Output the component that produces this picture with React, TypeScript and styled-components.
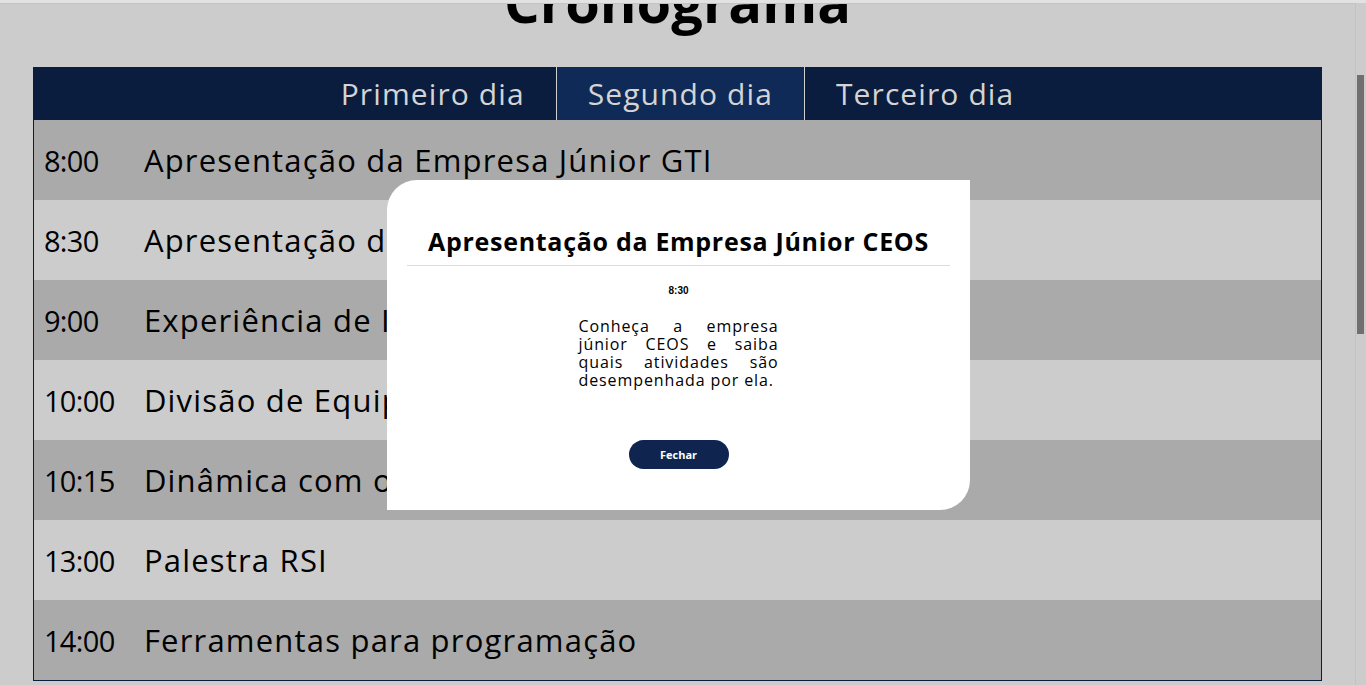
import React, { useState } from 'react';
import styled, { createGlobalStyle } from 'styled-components';

const FONT = '"Open Sans", "Noto Sans", "DejaVu Sans", sans-serif';

const GlobalStyle = createGlobalStyle`
  html, body {
    margin: 0;
    padding: 0;
    overflow: hidden;
    background: #cccccc;
    font-family: ${FONT};
  }
`;

const Page = styled.div`
  display: flex;
  height: 685px;
  border-top: 3px solid #e2e2e2;
  box-sizing: border-box;
`;

const Main = styled.main`
  flex: 1;
  display: flex;
  flex-direction: column;
  align-items: center;
  overflow: hidden;
  border-top: 1px solid #c4c4c4;
`;

const Title = styled.h1`
  margin: -37px 0 0;
  font-size: 56px;
  line-height: 68px;
  font-weight: 700;
  color: #000;
`;

const Schedule = styled.section`
  width: 95%;
  margin-top: 32px;
  border: 1px solid #0b1d3f;
  border-top: none;
`;

const TabBar = styled.nav`
  display: flex;
  justify-content: center;
  height: 53px;
  background: #0b1d3f;
`;

const Tab = styled.button<{ $active?: boolean }>`
  display: flex;
  align-items: center;
  padding: 0 31px;
  border: none;
  border-left: 1px solid #cfcfcf;
  background: ${(p) => (p.$active ? '#0f2a56' : 'transparent')};
  color: #d4d4d4;
  font-family: ${FONT};
  font-size: 30px;
  letter-spacing: 1.1px;
  font-weight: 400;
  cursor: pointer;

  &:first-child {
    border-left: none;
  }
`;

const Row = styled.div<{ $dark: boolean }>`
  display: flex;
  align-items: center;
  height: 80px;
  background: ${(p) => (p.$dark ? '#aaaaaa' : '#cccccc')};
  color: #000;
  font-size: 31px;
  letter-spacing: 1.2px;
`;

const Time = styled.span`
  width: 100px;
  padding-left: 10px;
  flex-shrink: 0;
  font-size: 29px;
  letter-spacing: -0.6px;
`;

const Label = styled.span`
  white-space: nowrap;
`;

const ScrollTrack = styled.div`
  width: 11px;
  border-left: 1px solid #c2c2c2;
  box-sizing: border-box;
  padding-top: 72px;
`;

const ScrollThumb = styled.div`
  margin-left: 1px;
  width: 7px;
  height: 259px;
  background: #6f6f6f;
`;

const Backdrop = styled.div`
  position: fixed;
  top: 0;
  left: 0;
  right: 9px;
  bottom: 0;
  display: flex;
  align-items: center;
  justify-content: center;
  padding-top: 5px;
`;

const Modal = styled.div`
  width: 583px;
  height: 330px;
  box-sizing: border-box;
  padding: 46px 20px 0;
  background: #fff;
  border-radius: 30px 0 30px 0;
  display: flex;
  flex-direction: column;
  align-items: center;
`;

const ModalTitle = styled.h2`
  margin: 0;
  font-size: 25px;
  line-height: 30px;
  font-weight: 700;
  letter-spacing: 0.7px;
  color: #000;
`;

const Divider = styled.hr`
  align-self: stretch;
  margin: 9px 0 0;
  border: none;
  border-top: 1px solid #dcdcdc;
`;

const ModalTime = styled.p`
  margin: 19px 0 0;
  font-family: "Liberation Sans", Arial, sans-serif;
  font-size: 10px;
  line-height: 12px;
  font-weight: 700;
  color: #000;
`;

const Description = styled.p`
  margin: 20px 0 0;
  width: 200px;
  font-size: 16px;
  line-height: 18px;
  letter-spacing: 0.9px;
  text-align: justify;
  color: #000;
`;

const CloseButton = styled.button`
  margin-top: 51px;
  width: 100px;
  height: 29px;
  border: none;
  border-radius: 15px;
  background: #0f2550;
  color: #fff;
  font-family: ${FONT};
  font-size: 11px;
  font-weight: 700;
  cursor: pointer;
`;

const days = ['Primeiro dia', 'Segundo dia', 'Terceiro dia'];

const events = [
  { time: '8:00', title: 'Apresentação da Empresa Júnior GTI' },
  { time: '8:30', title: 'Apresentação da Empresa Júnior CEOS' },
  { time: '9:00', title: 'Experiência de Intercâmbio' },
  { time: '10:00', title: 'Divisão de Equipes' },
  { time: '10:15', title: 'Dinâmica com os veteranos' },
  { time: '13:00', title: 'Palestra RSI' },
  { time: '14:00', title: 'Ferramentas para programação' },
];

const App: React.FC = () => {
  const [activeDay, setActiveDay] = useState<number>(1);
  const [open, setOpen] = useState<boolean>(true);

  return (
    <>
      <GlobalStyle />
      <Page>
        <Main>
          <Title>Cronograma</Title>
          <Schedule>
            <TabBar>
              {days.map((d, i) => (
                <Tab key={d} $active={i === activeDay} onClick={() => setActiveDay(i)}>
                  {d}
                </Tab>
              ))}
            </TabBar>
            {events.map((e, i) => (
              <Row key={e.time} $dark={i % 2 === 0}>
                <Time>{e.time}</Time>
                <Label>{e.title}</Label>
              </Row>
            ))}
          </Schedule>
        </Main>
        <ScrollTrack>
          <ScrollThumb />
        </ScrollTrack>
      </Page>
      {open && (
        <Backdrop>
          <Modal>
            <ModalTitle>Apresentação da Empresa Júnior CEOS</ModalTitle>
            <Divider />
            <ModalTime>8:30</ModalTime>
            <Description>
              Conheça a empresa júnior CEOS e saiba quais atividades são desempenhada por ela.
            </Description>
            <CloseButton onClick={() => setOpen(false)}>Fechar</CloseButton>
          </Modal>
        </Backdrop>
      )}
    </>
  );
};

export default App;
